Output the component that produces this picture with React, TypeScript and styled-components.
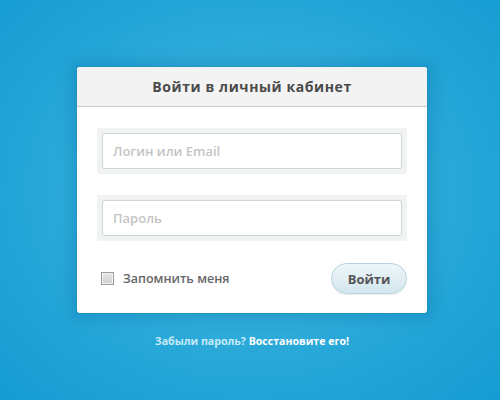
import React from "react";
import styled, {createGlobalStyle} from "styled-components";

const GlobalStyle = createGlobalStyle`
    html, body {
        margin: 0;
        padding: 0;
        height: 100%;
    }
    body {
        font-family: "Open Sans", "DejaVu Sans", sans-serif;
    }
`;

const Page = styled.div`
    width: 500px;
    height: 400px;
    box-sizing: border-box;
    padding: 67px 0 0 4px;
    display: flex;
    flex-direction: column;
    align-items: center;
    background: radial-gradient(ellipse at 50% 48%, #47bbe1 0%, #36b0dc 35%, #23a5d7 65%, #169cd3 100%);
`;

const Card = styled.form`
    width: 350px;
    margin: 0;
    background: #fff;
    border-radius: 3px;
    box-shadow: 0 0 0 1px rgba(20, 120, 165, 0.15), 0 0 14px 6px rgba(15, 110, 160, 0.3);
`;

const Header = styled.div`
    height: 39px;
    display: flex;
    align-items: center;
    justify-content: center;
    background: #f3f3f3;
    border-bottom: 1px solid #c9c9c9;
    border-radius: 3px 3px 0 0;
    color: #4a4a4a;
    font-size: 14px;
    font-weight: 700;
    letter-spacing: 0.6px;
`;

const Body = styled.div`
    padding: 21px 20px 19px;
    display: flex;
    flex-direction: column;
    gap: 21px;
`;

const FieldFrame = styled.div`
    padding: 5px;
    background: #f1f3f3;
    border-radius: 2px;
`;

const Input = styled.input`
    display: block;
    width: 100%;
    height: 36px;
    box-sizing: border-box;
    padding: 0 10px;
    border: 1px solid #cfd6d8;
    border-radius: 2px;
    background: #fff;
    font-family: inherit;
    font-size: 13px;
    font-weight: 600;
    color: #555;
    outline: none;

    &::placeholder {
        color: #c4c4c4;
    }
`;

const Footer = styled.div`
    display: flex;
    align-items: center;
    justify-content: space-between;
    padding-left: 4px;
    margin-top: 1px;
`;

const Remember = styled.label`
    display: flex;
    align-items: center;
    gap: 9px;
    color: #666;
    font-size: 12.5px;
    font-weight: 600;
    cursor: pointer;
`;

const Box = styled.span`
    width: 11px;
    height: 11px;
    border: 1px solid #9a9a9a;
    background: linear-gradient(#e6e6e6, #cfcfcf);
    box-shadow: inset 0 0 0 1px #f4f4f4;
`;

const Submit = styled.button`
    width: 76px;
    height: 31px;
    border-radius: 16px;
    border: 1px solid #b8d3dd;
    background: linear-gradient(#eef6f9, #d2e6ee);
    box-shadow: 0 1px 1px rgba(0, 0, 0, 0.08);
    color: #555;
    font-family: inherit;
    font-size: 13px;
    font-weight: 700;
    cursor: pointer;
`;

const Recover = styled.p`
    margin: 21px 0 0;
    font-size: 10.6px;
    font-weight: 700;
    color: #c6ecf9;

    a {
        color: #ffffff;
        text-decoration: none;
    }
`;

export default function App() {
    return (
        <>
            <GlobalStyle/>
            <Page>
                <Card onSubmit={e => e.preventDefault()}>
                    <Header>Войти в личный кабинет</Header>
                    <Body>
                        <FieldFrame>
                            <Input type="text" placeholder="Логин или Email"/>
                        </FieldFrame>
                        <FieldFrame>
                            <Input type="password" placeholder="Пароль"/>
                        </FieldFrame>
                        <Footer>
                            <Remember>
                                <Box/>
                                Запомнить меня
                            </Remember>
                            <Submit type="submit">Войти</Submit>
                        </Footer>
                    </Body>
                </Card>
                <Recover>
                    Забыли пароль? <a href="#">Восстановите его!</a>
                </Recover>
            </Page>
        </>
    );
}
